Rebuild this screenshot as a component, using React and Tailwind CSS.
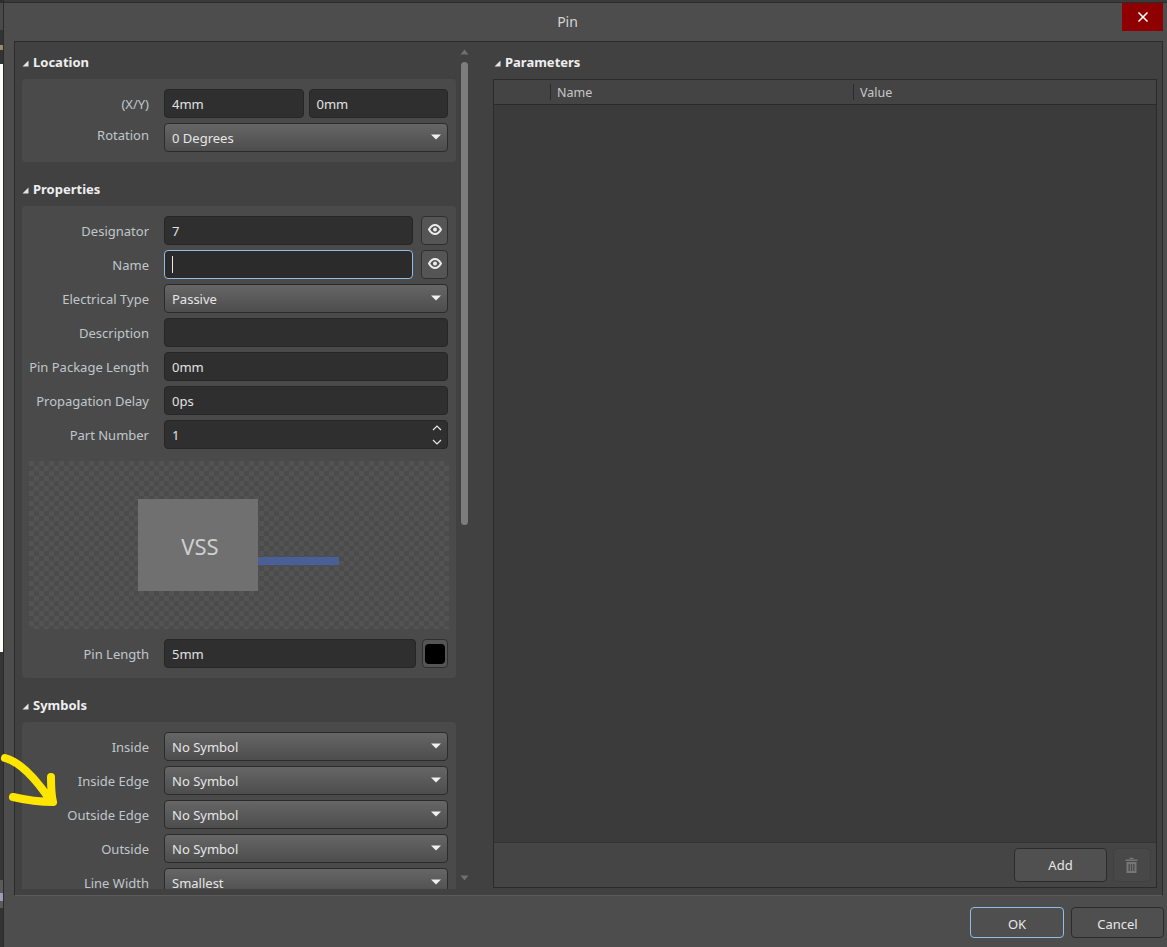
import React from 'react';

const Tri = () => (
  <svg width="7" height="7" viewBox="0 0 7 7" className="shrink-0">
    <polygon points="6.5,0.5 6.5,6.5 0.5,6.5" fill="#e4e4e4" />
  </svg>
);

const Heading = ({ children, className = '' }) => (
  <div className={`h-5 mb-[7px] flex items-center gap-1 pt-[2px] text-[13px] font-bold text-[#efefef] ${className}`}>
    <Tri />
    <span>{children}</span>
  </div>
);

const Caret = () => (
  <svg width="12" height="7" viewBox="0 0 12 7" className="shrink-0">
    <polygon points="1,0.5 11,0.5 6,5.5" fill="#f0f0f0" />
  </svg>
);

const Label = ({ children, className = 'pt-[2px]' }) => (
  <div className={`w-[127px] shrink-0 text-right text-[#c0c7cb] ${className}`}>{children}</div>
);

const Row = ({ label, children, gap = 'gap-[5px]', labelClass }) => (
  <div className="flex h-[29px] items-center gap-[15px]">
    <Label className={labelClass}>{label}</Label>
    <div className={`flex min-w-0 flex-1 ${gap}`}>{children}</div>
  </div>
);

const Input = ({ value, children, focused, className = 'flex-1' }) => (
  <div
    className={`flex h-[29px] items-center justify-between rounded border pl-[7px] text-[#e2e2e2] ${
      focused ? 'border-[#8fbde6] bg-[#2b2b2b]' : 'border-[#262626] bg-[#2f2f2f]'
    } ${className}`}
  >
    <span className="pt-[2px]">{value}</span>
    {children}
  </div>
);

const Select = ({ value }) => (
  <div className="flex h-[29px] flex-1 items-center justify-between rounded border border-[#2b2b2b] bg-gradient-to-b from-[#666666] to-[#4d4d4d] pl-[7px] pr-[5px] text-[#e6e6e6]">
    <span className="pt-[2px]">{value}</span>
    <Caret />
  </div>
);

const EyeButton = () => (
  <div className="flex h-[29px] w-[27px] shrink-0 items-center justify-center rounded border border-[#2f2f2f] bg-[#555555] pb-[2px]">
    <svg width="14" height="11" viewBox="0 0 14 11">
      <path d="M1 5.5 C3 2 5 1 7 1 C9 1 11 2 13 5.5 C11 9 9 10 7 10 C5 10 3 9 1 5.5 Z" fill="none" stroke="#ececec" strokeWidth="2" />
      <circle cx="7" cy="5.5" r="2" fill="#ececec" />
    </svg>
  </div>
);

const properties = [
  ['Electrical Type', 'select', 'Passive'],
  ['Description', 'input', ''],
  ['Pin Package Length', 'input', '0mm'],
  ['Propagation Delay', 'input', '0ps'],
];

const symbols = [
  ['Inside', 'No Symbol'],
  ['Inside Edge', 'No Symbol'],
  ['Outside Edge', 'No Symbol'],
  ['Outside', 'No Symbol'],
  ['Line Width', 'Smallest'],
];

const App = () => {
  return (
    <div className="relative flex h-[947px] w-[1167px] overflow-hidden bg-[#4d4d4d] text-[13px] [font-family:'Noto_Sans',sans-serif]">
      {/* bit of the window behind the dialog */}
      <div className="flex w-[3px] shrink-0 flex-col">
        <div className="h-[3px] bg-[#2e2e2e]" />
        <div className="h-[27px] bg-[#4a4a4a]" />
        <div className="h-[15px] bg-[#333333]" />
        <div className="h-[5px] bg-[#9a8a6a]" />
        <div className="h-[14px] bg-[#333333]" />
        <div className="h-[588px] bg-[#fffdf9]" />
        <div className="h-[228px] bg-[#363636]" />
        <div className="h-[13px] bg-[#5a5a5a]" />
        <div className="h-[8px] bg-[#a09ab8]" />
        <div className="h-[7px] bg-[#5a5a5a]" />
        <div className="flex-1 bg-[#333333]" />
      </div>

      <div className="flex min-w-0 flex-1 flex-col border-l border-[#2b2b2b]">
        <div className="h-[3px] shrink-0 border-b border-[#2b2b2b] bg-[#3a3a3a]" />

        {/* title bar */}
        <div className="relative flex h-[38px] shrink-0 items-center justify-center pr-[36px] text-sm text-[#d4d4d4]">
          Pin
          <div className="absolute right-[4px] top-0 flex h-[28px] w-[41px] items-center justify-center bg-[#8f0000] text-white">
            <svg width="12" height="12" viewBox="0 0 12 12">
              <path d="M1.5 1.5 L10.5 10.5 M10.5 1.5 L1.5 10.5" stroke="#ffffff" strokeWidth="1.6" />
            </svg>
          </div>
        </div>

        {/* main panel */}
        <div className="ml-[10px] mr-[4px] flex h-[855px] shrink-0 border border-[#2b2b2b] border-b-[#5a5a5a] bg-[#414141]">
          <div className="flex h-[847px] w-[458px] shrink-0 overflow-hidden">
            <div className="w-[441px] shrink-0 pl-[7px] pt-[10px]">
              <Heading>Location</Heading>
              <div className="flex w-[434px] flex-col gap-[5px] rounded bg-[#4a4a4a] py-[10px] pr-2">
                <Row label="(X/Y)">
                  <Input value="4mm" />
                  <Input value="0mm" />
                </Row>
                <Row label="Rotation" labelClass="pb-[4px]">
                  <Select value="0 Degrees" />
                </Row>
              </div>

              <Heading className="mt-[17px]">Properties</Heading>
              <div className="flex w-[434px] flex-col gap-[5px] rounded bg-[#4a4a4a] py-[10px] pr-2">
                <Row label="Designator" gap="gap-[8px]">
                  <Input value="7" />
                  <EyeButton />
                </Row>
                <Row label="Name" gap="gap-[8px]">
                  <Input focused value={<span className="mb-[2px] block h-[17px] w-px bg-[#e8e8e8]" />} />
                  <EyeButton />
                </Row>
                {properties.map(([label, type, value]) => (
                  <Row key={label} label={label}>
                    {type === 'select' ? <Select value={value} /> : <Input value={value} />}
                  </Row>
                ))}
                <Row label="Part Number">
                  <Input value="1">
                    <svg width="12" height="24" viewBox="0 0 12 24" className="mr-1 shrink-0">
                      <path d="M2 7 L6 3 L10 7 M2 17 L6 21 L10 17" fill="none" stroke="#e8e8e8" strokeWidth="1.2" />
                    </svg>
                  </Input>
                </Row>

                {/* pin preview */}
                <div className="ml-[7px] mb-[5px] mt-[7px] flex h-[168px] w-[420px] items-start bg-[repeating-conic-gradient(#4b4b4b_0%_25%,#535353_0%_50%)] bg-[length:10px_10px] pl-[109px] pt-[38px]">
                  <div className="flex h-[92px] w-[120px] shrink-0 items-center justify-center bg-[#707070] pl-1 pt-[2px] text-[22px] text-[#cfcfcf]">
                    VSS
                  </div>
                  <div className="mt-[58px] h-2 w-[81px] bg-[#4a5f9a]" />
                </div>

                <div className="flex h-[29px] items-center gap-[15px]">
                  <Label>Pin Length</Label>
                  <div className="flex flex-1 gap-[6px]">
                    <Input value="5mm" />
                    <div className="flex h-[29px] w-[26px] shrink-0 items-center justify-center rounded border border-[#2f2f2f] bg-[#555555]">
                      <div className="h-[20px] w-[20px] rounded-sm bg-black" />
                    </div>
                  </div>
                </div>
              </div>

              <Heading className="mt-[17px]">Symbols</Heading>
              <div className="flex w-[434px] flex-col gap-[5px] rounded bg-[#4a4a4a] py-[10px] pr-2">
                {symbols.map(([label, value]) => (
                  <Row key={label} label={label}>
                    <Select value={value} />
                  </Row>
                ))}
              </div>
            </div>

            {/* scrollbar */}
            <div className="flex w-[17px] shrink-0 flex-col items-start pl-[4px] pt-[7px]">
              <svg width="9" height="6" viewBox="0 0 9 6" className="shrink-0">
                <polygon points="4.5,0.5 8.5,5.5 0.5,5.5" fill="#707070" />
              </svg>
              <div className="ml-[1px] mt-[7px] h-[463px] w-[7px] rounded-full bg-[#7d7d7d]" />
              <svg width="9" height="6" viewBox="0 0 9 6" className="mt-[350px] shrink-0">
                <polygon points="0.5,0.5 8.5,0.5 4.5,5.5" fill="#707070" />
              </svg>
            </div>
          </div>

          {/* parameters */}
          <div className="flex min-w-0 flex-1 flex-col pb-[7px] pl-[20px] pr-[5px] pt-[10px]">
            <Heading className="pl-px">Parameters</Heading>
            <div className="flex min-h-0 flex-1 flex-col border border-[#2b2b2b] bg-[#3b3b3b]">
              <div className="flex h-[25px] shrink-0 items-center border-b border-[#2b2b2b] bg-[#444444] text-[12.5px] text-[#c8c8c8]">
                <div className="w-[56px] shrink-0" />
                <div className="h-[16px] w-[303px] shrink-0 border-l border-[#2b2b2b] pl-[6px] leading-[18px]">Name</div>
                <div className="h-[16px] flex-1 border-l border-[#2b2b2b] pl-[6px] leading-[18px]">Value</div>
              </div>
              <div className="flex-1" />
              <div className="flex h-[45px] shrink-0 items-center justify-end gap-[6px] border-t border-[#333333] bg-[#454545] pr-[5px]">
                <div className="flex h-[34px] w-[93px] items-center justify-center rounded border border-[#2b2b2b] bg-[#505050] pt-[2px] text-[#e6e6e6]">
                  Add
                </div>
                <div className="flex h-[34px] w-[38px] items-center justify-center rounded border border-[#414141] bg-[#484848] pr-[2px]">
                  <svg width="13" height="17" viewBox="0 0 13 17">
                    <path d="M4.5 2 V0.8 H8.5 V2 M0.5 2.5 H12.5 V4 H0.5 Z" fill="#767676" />
                    <path d="M1.5 5 H11.5 V16 H1.5 Z M3.5 7 V14 H4.8 V7 Z M5.9 7 V14 H7.1 V7 Z M8.2 7 V14 H9.5 V7 Z" fill="#767676" fillRule="evenodd" />
                  </svg>
                </div>
              </div>
            </div>
          </div>
        </div>

        {/* footer buttons */}
        <div className="flex flex-1 items-start justify-end gap-[7px] pr-[3px] pt-[11px]">
          <div className="flex h-[31px] w-[94px] items-center justify-center rounded border border-[#8fbde6] bg-[#4f4f4f] pt-1 text-[#e8e8e8]">OK</div>
          <div className="flex h-[31px] w-[93px] items-center justify-center rounded border border-[#2b2b2b] bg-[#4f4f4f] pt-1 text-[#e8e8e8]">Cancel</div>
        </div>
      </div>

      {/* yellow arrow drawn over the screenshot */}
      <svg width="70" height="70" viewBox="0 0 70 70" className="absolute left-0 top-[750px]">
        <path
          d="M5 8 C20 12 34 26 50 50 M51 27 C51 36 51 44 53 52 C40 52 26 50 13 47"
          fill="none"
          stroke="#ffe600"
          strokeWidth="8"
          strokeLinecap="round"
          strokeLinejoin="round"
        />
      </svg>
    </div>
  );
};

export default App;
